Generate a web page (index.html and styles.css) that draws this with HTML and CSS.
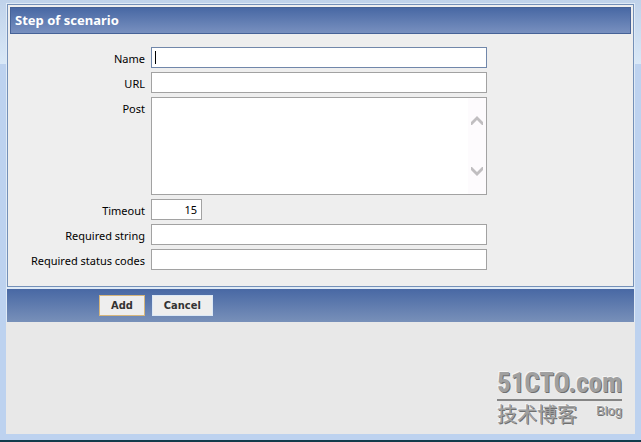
FILE: index.html
```html
<!DOCTYPE html>
<html lang="en">
<head>
<meta charset="UTF-8">
<meta name="viewport" content="width=device-width, initial-scale=1.0">
<title>Step of scenario</title>
<link rel="stylesheet" href="styles.css">
</head>
<body>
<div class="window">
  <form class="content">
    <section class="panel">
      <h1 class="title">Step of scenario</h1>
      <div class="fields">
        <label for="name">Name</label>
        <div class="field">
          <input class="text active" type="text" id="name">
          <span class="caret"></span>
        </div>

        <label for="url">URL</label>
        <input class="text" type="text" id="url">

        <label for="post">Post</label>
        <div class="field">
          <textarea class="text area" id="post"></textarea>
          <div class="scroll">
            <svg width="12" height="9" viewBox="0 0 12 9"><path d="M0 6 6 0 12 6V9H11L6 4 1 9H0Z"/></svg>
            <svg width="12" height="9" viewBox="0 0 12 9"><path d="M0 3 6 9 12 3V0H11L6 5 1 0H0Z"/></svg>
          </div>
        </div>

        <label for="timeout">Timeout</label>
        <input class="text number" type="text" id="timeout" value="15">

        <label for="required">Required string</label>
        <input class="text" type="text" id="required">

        <label for="codes">Required status codes</label>
        <input class="text" type="text" id="codes">
      </div>
    </section>
    <div class="footer">
      <button class="button default" type="button">Add</button>
      <button class="button" type="button">Cancel</button>
    </div>
  </form>
  <div class="watermark">
    <div class="site">51CTO.com</div>
    <div class="tagline"><span class="cn" lang="zh">技术博客</span><span class="blog">Blog</span></div>
  </div>
</div>
</body>
</html>
```

FILE: styles.css
```css
* {
  box-sizing: border-box;
}

body {
  display: flex;
  min-height: 100vh;
  margin: 0;
  padding: 3px 6px 6px;
  border-bottom: 2px solid #123c4c;
  background: linear-gradient(#bfd2ea 0, #d9e8f7 64px, #bdd2ef 64px);
  font-family: "Noto Sans", "DejaVu Sans", sans-serif;
  font-size: 11px;
  color: #000;
}

.window {
  flex: 1;
  display: flex;
  flex-direction: column;
  justify-content: space-between;
  background: #e8e8e8;
}

.content {
  display: flex;
  flex-direction: column;
  gap: 2px;
  padding: 1px 1px 0;
  background: #dfeaf6;
}

.panel {
  padding: 2px 2px 16px;
  border: 1px solid #7490b8;
  background: #eee;
}

.title {
  margin: 0;
  padding: 4px;
  border: 1px solid #466297;
  background: linear-gradient(#4868a4, #7890bf);
  font-size: 13px;
  line-height: 17px;
  color: #fff;
}

.fields {
  display: grid;
  grid-template-columns: 135px minmax(0, 336px);
  gap: 4px 6px;
  padding-top: 13px;
}

.fields label {
  padding-top: 4px;
  line-height: 16px;
  text-align: right;
}

.field {
  position: relative;
}

.text {
  display: block;
  width: 100%;
  height: 21px;
  margin: 0;
  padding: 2px 4px;
  border: 1px solid #a2a2a2;
  border-radius: 0;
  outline: none;
  background: #fff;
  font: inherit;
}

.active {
  border-color: #7187aa;
}

.caret {
  position: absolute;
  top: 4px;
  left: 4px;
  width: 1px;
  height: 13px;
  background: #000;
}

.area {
  height: 98px;
  resize: none;
}

.scroll {
  position: absolute;
  top: 1px;
  right: 1px;
  bottom: 1px;
  display: flex;
  flex-direction: column;
  justify-content: space-between;
  padding: 18px 3px;
  background: #fdfbfd;
  fill: #c0bec0;
}

.number {
  width: 51px;
  text-align: right;
}

.footer {
  display: flex;
  gap: 7px;
  padding: 6px 92px;
  background: linear-gradient(#4868a4, #7890b9);
}

.button {
  height: 21px;
  padding: 0 11px;
  border: 1px solid #dce8f5;
  background: #eee;
  font-family: "DejaVu Sans Condensed", "DejaVu Sans", sans-serif;
  font-size: 11px;
  font-weight: bold;
  color: #333;
}

.default {
  border-color: #d6b67c;
}

.watermark {
  align-self: flex-end;
  margin: 0 13px 4px 0;
  color: #a0a0a0;
  text-shadow: 1px 1px #707070, -1px -1px #f4f4f4;
}

.site {
  border-bottom: 2px solid #858585;
  font-family: "Roboto Condensed", "Liberation Sans", sans-serif;
  font-size: 27px;
  font-weight: bold;
  line-height: 31px;
}

.tagline {
  display: flex;
  justify-content: space-between;
  line-height: 29px;
}

.cn {
  font-family: "Liberation Sans", "Noto Sans CJK SC", sans-serif;
  font-size: 20px;
}

.blog {
  font-family: "Liberation Sans", sans-serif;
  font-size: 13px;
  line-height: 19px;
}
```
